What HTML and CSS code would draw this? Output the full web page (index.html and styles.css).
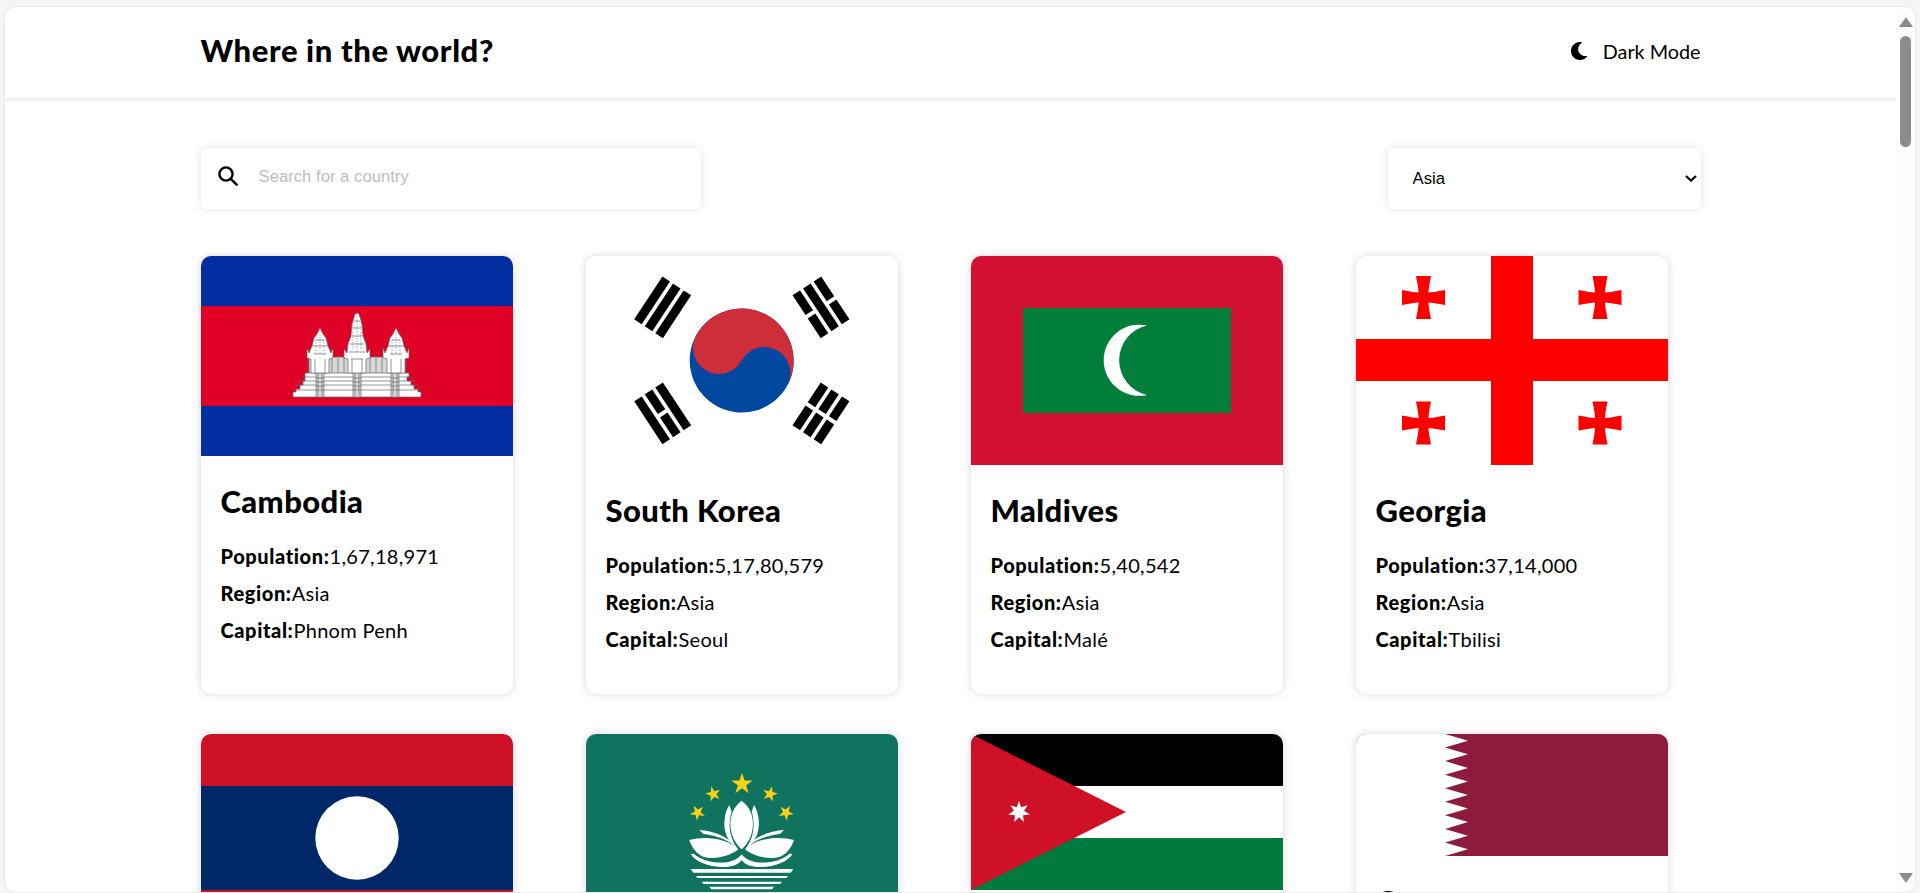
FILE: index.html
```html
<!DOCTYPE html>
<html lang="en">
<head>
    <meta charset="UTF-8">
    <title>Where in the world?</title>
    <link rel="stylesheet" href="styles.css">
</head>
<body>
    <div class="window">
        <div class="page">
            <header class="topbar">
                <div class="container topbar-row">
                    <h1 class="logo">Where in the world?</h1>
                    <div class="mode">
                        <svg class="mode-icon" viewBox="0 0 512 512"><path d="M283.211 512c78.962 0 151.079-35.925 198.857-94.792 7.068-8.708-.639-21.43-11.562-19.35-124.203 23.654-238.262-71.576-238.262-196.954 0-72.222 38.662-138.635 101.498-174.394 9.686-5.512 7.25-20.197-3.756-22.23A258.156 258.156 0 0 0 283.211 0c-141.309 0-256 114.511-256 256 0 141.309 114.511 256 256 256z"/></svg>
                        <span>Dark Mode</span>
                    </div>
                </div>
            </header>

            <main class="container">
                <div class="toolbar">
                    <label class="search">
                        <svg class="search-icon" viewBox="0 0 20 20"><circle cx="8" cy="8" r="6.6" fill="none" stroke="#000" stroke-width="2.4"/><path d="M12.8 12.8L18.6 18.6" stroke="#000" stroke-width="2.6" stroke-linecap="round"/></svg>
                        <input class="search-input" type="text" placeholder="Search for a country">
                    </label>
                    <div class="region-box">
                        <select class="region">
                            <option>Asia</option>
                        </select>
                        <svg class="region-arrow" viewBox="0 0 12 7"><path d="M1 1L6 5.6L11 1" fill="none" stroke="#000" stroke-width="2.2"/></svg>
                    </div>
                </div>

                <div class="grid">
                    <article class="card">
                        <svg class="flag" viewBox="0 0 312 200">
                            <rect width="312" height="200" fill="#032ea1"/>
                            <rect y="50" width="312" height="100" fill="#e00025"/>
                            <g fill="#fff" stroke="#666" stroke-width=".7">
                                <rect x="108" y="101" width="96" height="17" fill="#d8d8d8"/>
                                <path d="M107 118V102M113 118V102M119 118V102M125 118V102M131 118V102M137 118V102M143 118V102M169 118V102M175 118V102M181 118V102M187 118V102M193 118V102M199 118V102M205 118V102" fill="none"/>
                                <path d="M104 117H208V121H206V125H210V129H213V133H217V136H220V141H92V136H95V133H99V129H102V125H104Z"/>
                                <path d="M100 121H212M97 125H215M94 129H218M93 134H219" fill="none"/>
                                <path d="M115 117h8v24h-8zM152 117h8v24h-8zM190 117h8v24h-8z" fill="#ddd"/>
                                <path d="M117 118v22M121 118v22M154 118v22M158 118v22M192 118v22M196 118v22M115 122h8M115 126h8M115 130h8M115 134h8M152 122h8M152 126h8M152 130h8M152 134h8M190 122h8M190 126h8M190 130h8M190 134h8" fill="none"/>
                                <path d="M106 102V92L108 97L111 90L113 82L116 78L119 72L122 78L125 82L127 90L130 97L132 92V102L128 103V117H110V103Z"/>
                                <path d="M182 102V92L184 97L187 90L189 82L192 78L195 72L198 78L201 82L203 90L206 97L208 92V102L204 103V117H186V103Z"/>
                                <path d="M143 102V93L146 97L147 88L150 80L151 68L154 58L156 57L158 58L161 68L162 80L165 88L166 97L169 93V102L165 103V117H147V103Z"/>
                                <path d="M113 98H125M111 90H127M115 84H123M189 98H201M187 90H203M191 84H199M148 96H164M149 88H163M151 80H161M152 72H160M153 65H159M150 103H162M114 103V117M124 103V117M190 103V117M200 103V117M151 103V117M161 103V117" fill="none"/>
                                <path d="M119 76V98M195 76V98M156 60V96M152 66V94M160 66V94M115 84V98M123 84V98M191 84V98M199 84V98" fill="none" stroke-dasharray="1 1.5"/>
                            </g>
                        </svg>
                        <div class="card-body">
                            <h2 class="name">Cambodia</h2>
                            <p class="fact"><strong>Population:</strong>1,67,18,971</p>
                            <p class="fact"><strong>Region:</strong>Asia</p>
                            <p class="fact"><strong>Capital:</strong>Phnom Penh</p>
                        </div>
                    </article>

                    <article class="card">
                        <svg class="flag" viewBox="0 0 312 209">
                            <rect width="312" height="209" fill="#fff"/>
                            <g transform="translate(-6 -6) scale(.3333)">
                                <g transform="translate(248 172) rotate(-56.6)">
                                    <rect x="-77" y="-51.5" width="154" height="27"/>
                                    <rect x="-77" y="-13.5" width="154" height="27"/>
                                    <rect x="-77" y="24.5" width="154" height="27"/>
                                </g>
                                <g transform="translate(723 172) rotate(56.6)">
                                    <rect x="-77" y="-51.5" width="71" height="27"/>
                                    <rect x="6" y="-51.5" width="71" height="27"/>
                                    <rect x="-77" y="-13.5" width="154" height="27"/>
                                    <rect x="-77" y="24.5" width="71" height="27"/>
                                    <rect x="6" y="24.5" width="71" height="27"/>
                                </g>
                                <g transform="translate(248 490) rotate(56.6)">
                                    <rect x="-77" y="-51.5" width="154" height="27"/>
                                    <rect x="-77" y="-13.5" width="71" height="27"/>
                                    <rect x="6" y="-13.5" width="71" height="27"/>
                                    <rect x="-77" y="24.5" width="154" height="27"/>
                                </g>
                                <g transform="translate(723 490) rotate(-56.6)">
                                    <rect x="-77" y="-51.5" width="71" height="27"/>
                                    <rect x="6" y="-51.5" width="71" height="27"/>
                                    <rect x="-77" y="-13.5" width="71" height="27"/>
                                    <rect x="6" y="-13.5" width="71" height="27"/>
                                    <rect x="-77" y="24.5" width="71" height="27"/>
                                    <rect x="6" y="24.5" width="71" height="27"/>
                                </g>
                            </g>
                            <g transform="translate(155.7 104.5) rotate(29)">
                                <circle r="52" fill="#0047a0"/>
                                <path d="M-52 0A52 52 0 0 1 52 0A26 26 0 0 0 0 0A26 26 0 0 1 -52 0Z" fill="#cd2e3a"/>
                            </g>
                        </svg>
                        <div class="card-body">
                            <h2 class="name">South Korea</h2>
                            <p class="fact"><strong>Population:</strong>5,17,80,579</p>
                            <p class="fact"><strong>Region:</strong>Asia</p>
                            <p class="fact"><strong>Capital:</strong>Seoul</p>
                        </div>
                    </article>

                    <article class="card">
                        <svg class="flag" viewBox="0 0 312 209">
                            <rect width="312" height="209" fill="#d21034"/>
                            <rect x="52" y="52" width="208" height="105" fill="#007e3a"/>
                            <path d="M176 69.5A35.6 35.6 0 1 0 176 139A35.6 35.6 0 0 1 176 69.5Z" fill="#fff"/>
                        </svg>
                        <div class="card-body">
                            <h2 class="name">Maldives</h2>
                            <p class="fact"><strong>Population:</strong>5,40,542</p>
                            <p class="fact"><strong>Region:</strong>Asia</p>
                            <p class="fact"><strong>Capital:</strong>Malé</p>
                        </div>
                    </article>

                    <article class="card">
                        <svg class="flag" viewBox="0 0 312 209">
                            <defs>
                                <path id="bolnisi" d="M-7.5 -21.5H7.5Q5 -9 5 -5Q9 -5 21.5 -7.5V7.5Q9 5 5 5Q5 9 7.5 21.5H-7.5Q-5 9 -5 5Q-9 5 -21.5 7.5V-7.5Q-9 -5 -5 -5Q-5 -9 -7.5 -21.5Z"/>
                            </defs>
                            <rect width="312" height="209" fill="#fff"/>
                            <g fill="#f00">
                                <rect x="135" width="42" height="209"/>
                                <rect y="83" width="312" height="42"/>
                                <use href="#bolnisi" x="67.5" y="41.5"/>
                                <use href="#bolnisi" x="244" y="41.5"/>
                                <use href="#bolnisi" x="67.5" y="167"/>
                                <use href="#bolnisi" x="244" y="167"/>
                            </g>
                        </svg>
                        <div class="card-body">
                            <h2 class="name">Georgia</h2>
                            <p class="fact"><strong>Population:</strong>37,14,000</p>
                            <p class="fact"><strong>Region:</strong>Asia</p>
                            <p class="fact"><strong>Capital:</strong>Tbilisi</p>
                        </div>
                    </article>

                    <article class="card">
                        <svg class="flag" viewBox="0 0 312 208">
                            <rect width="312" height="208" fill="#ce1126"/>
                            <rect y="52" width="312" height="104" fill="#002868"/>
                            <circle cx="156" cy="104" r="41.7" fill="#fff"/>
                        </svg>
                        <div class="card-body">
                            <h2 class="name">Laos</h2>
                            <p class="fact"><strong>Population:</strong>72,75,556</p>
                            <p class="fact"><strong>Region:</strong>Asia</p>
                            <p class="fact"><strong>Capital:</strong>Vientiane</p>
                        </div>
                    </article>

                    <article class="card">
                        <svg class="flag" viewBox="0 0 312 209">
                            <defs>
                                <polygon id="star" points="0,-1 .225,-.309 .951,-.309 .363,.118 .588,.809 0,.382 -.588,.809 -.363,.118 -.951,-.309 -.225,-.309"/>
                            </defs>
                            <rect width="312" height="209" fill="#107360"/>
                            <g transform="translate(84 26) scale(.3333)">
                                <g fill="#fbd116">
                                    <use href="#star" transform="translate(216 72) scale(34)"/>
                                    <use href="#star" transform="translate(130 102) rotate(-15) scale(24)"/>
                                    <use href="#star" transform="translate(300 102) rotate(15) scale(24)"/>
                                    <use href="#star" transform="translate(83 158) rotate(-30) scale(24)"/>
                                    <use href="#star" transform="translate(348 158) rotate(30) scale(24)"/>
                                </g>
                                <g fill="#fff">
                                    <path d="M215 122C190 140 178 170 182 205C186 235 200 255 215 268C230 255 244 235 248 205C252 170 240 140 215 122Z"/>
                                    <path d="M178 135C165 155 158 190 168 222C175 242 190 258 205 268C186 245 170 205 185 155Z"/>
                                    <path d="M252 135C265 155 272 190 262 222C255 242 240 258 225 268C244 245 260 205 245 155Z"/>
                                    <path d="M58 240C100 228 170 232 205 268C180 290 130 300 100 290C80 282 65 262 58 240Z"/>
                                    <path d="M372 240C330 228 260 232 225 268C250 290 300 300 330 290C350 282 365 262 372 240Z"/>
                                    <path d="M88 210C130 212 175 230 195 258C165 235 130 225 100 222Z"/>
                                    <path d="M342 210C300 212 255 230 235 258C265 235 300 225 330 222Z"/>
                                    <path d="M62 282L72 281C90 300 135 312 175 306C195 302 208 292 215 283C222 292 235 302 255 306C295 312 340 300 358 281L368 282C350 310 300 325 255 320C235 318 222 310 215 300C208 310 195 318 175 320C130 325 80 310 62 282Z"/>
                                    <polygon points="62,327 370,327 362,338 70,338"/>
                                    <polygon points="78,348 354,348 350,354 82,354"/>
                                    <polygon points="95,365 336,365 330,372 100,372"/>
                                    <polygon points="118,380 312,380 306,388 124,388"/>
                                </g>
                            </g>
                        </svg>
                        <div class="card-body">
                            <h2 class="name">Macau</h2>
                            <p class="fact"><strong>Population:</strong>6,49,342</p>
                            <p class="fact"><strong>Region:</strong>Asia</p>
                        </div>
                    </article>

                    <article class="card">
                        <svg class="flag" viewBox="0 0 312 156">
                            <rect width="312" height="52" fill="#000"/>
                            <rect y="52" width="312" height="52" fill="#fff"/>
                            <rect y="104" width="312" height="52" fill="#007a3d"/>
                            <polygon points="0,0 155,78 0,156" fill="#ce1126"/>
                            <polygon transform="translate(48 78)" fill="#fff" points="0,-11 2.26,-4.69 8.6,-6.86 5.07,-1.16 10.72,2.45 4.07,3.24 4.77,9.91 0,5.2 -4.77,9.91 -4.07,3.24 -10.72,2.45 -5.07,-1.16 -8.6,-6.86 -2.26,-4.69"/>
                        </svg>
                        <div class="card-body">
                            <h2 class="name">Jordan</h2>
                            <p class="fact"><strong>Population:</strong>1,01,01,694</p>
                            <p class="fact"><strong>Region:</strong>Asia</p>
                            <p class="fact"><strong>Capital:</strong>Amman</p>
                        </div>
                    </article>

                    <article class="card">
                        <svg class="flag" viewBox="0 0 312 122">
                            <rect width="312" height="122" fill="#8d1b3d"/>
                            <polygon fill="#fff" points="0,0 89,0 112,6.8 89,13.6 112,20.3 89,27.1 112,33.9 89,40.7 112,47.5 89,54.2 112,61 89,67.8 112,74.6 89,81.3 112,88.1 89,94.9 112,101.7 89,108.4 112,115.2 89,122 0,122"/>
                        </svg>
                        <div class="card-body">
                            <h2 class="name">Qatar</h2>
                            <p class="fact"><strong>Population:</strong>28,81,060</p>
                            <p class="fact"><strong>Region:</strong>Asia</p>
                            <p class="fact"><strong>Capital:</strong>Doha</p>
                        </div>
                    </article>
                </div>
            </main>
        </div>

        <div class="scrollbar">
            <span class="arrow-up"></span>
            <span class="thumb"></span>
            <span class="arrow-down"></span>
        </div>
    </div>
</body>
</html>
```

FILE: styles.css
```css
html, body {
    height: 100%;
}

body {
    margin: 0;
    padding: 7px 5px 1px;
    box-sizing: border-box;
    background-color: #f5f5f5;
    color: #000;
    font-family: Lato, "Noto Sans", sans-serif;
    overflow: hidden;
}

.window {
    display: flex;
    height: 100%;
    background-color: #fff;
    border-radius: 10px;
    box-shadow: 0 0 2px rgba(0, 0, 0, 0.15);
    overflow: hidden;
}

.page {
    flex: 1;
    min-width: 0;
    overflow: hidden;
}

.container {
    width: 1500px;
    margin: 0 auto;
}

.topbar {
    height: 91px;
    box-shadow: 0 2px 4px rgba(0, 0, 0, 0.1);
}

.topbar-row {
    display: flex;
    align-items: center;
    justify-content: space-between;
    height: 100%;
    padding-bottom: 4px;
    box-sizing: border-box;
}

.logo {
    margin: 0 0 2px;
    font-size: 31px;
    font-weight: 900;
    letter-spacing: 0.6px;
}

.mode {
    display: flex;
    align-items: center;
    gap: 15px;
    font-size: 19.8px;
}

.mode-icon {
    width: 18px;
    height: 18px;
}

.toolbar {
    display: flex;
    justify-content: space-between;
    margin-top: 50px;
    margin-bottom: 47px;
}

.search {
    display: flex;
    align-items: center;
    gap: 21px;
    width: 500px;
    height: 61px;
    padding: 0 0 4px 17px;
    box-sizing: border-box;
    background-color: #fff;
    border-radius: 6px;
    box-shadow: 0 0 8px rgba(0, 0, 0, 0.12);
}

.search-icon {
    width: 20px;
    height: 20px;
    flex: none;
    margin-bottom: 2px;
}

.search-input {
    flex: 1;
    border: none;
    outline: none;
    background: none;
    padding: 0;
    font-family: "Liberation Sans", sans-serif;
    font-size: 16.7px;
}

.search-input::placeholder {
    color: #bdbdbd;
}

.region-box {
    position: relative;
}

.region {
    display: block;
    width: 313px;
    height: 61px;
    padding: 0 30px 0 25px;
    border: none;
    border-radius: 6px;
    outline: none;
    appearance: none;
    background-color: #fff;
    color: #000;
    font-family: "Liberation Sans", sans-serif;
    font-size: 16.7px;
    box-shadow: 0 0 8px rgba(0, 0, 0, 0.12);
}

.region-arrow {
    position: absolute;
    top: 27px;
    right: 4px;
    width: 12px;
    height: 7px;
    pointer-events: none;
}

.grid {
    display: grid;
    grid-template-columns: repeat(4, 312px);
    column-gap: 73px;
    row-gap: 40px;
}

.card {
    background-color: #fff;
    border-radius: 10px;
    overflow: hidden;
    box-shadow: 0 0 8px rgba(0, 0, 0, 0.16);
}

.flag {
    display: block;
    width: 100%;
}

.card-body {
    padding: 25px 20px 36px;
}

.name {
    margin: 0 0 17px;
    font-size: 31px;
    line-height: 40px;
    font-weight: 900;
    letter-spacing: 0.4px;
}

.fact {
    margin: 0;
    font-size: 20px;
    line-height: 37px;
    letter-spacing: 0.3px;
}

.fact strong {
    font-weight: 900;
    letter-spacing: 0.6px;
}

.scrollbar {
    display: flex;
    flex-direction: column;
    align-items: center;
    flex: none;
    width: 19px;
    padding: 10px 0 9px;
    box-sizing: border-box;
    background-color: #fdfdfd;
}

.arrow-up,
.arrow-down {
    width: 0;
    height: 0;
    border-left: 7px solid transparent;
    border-right: 7px solid transparent;
}

.arrow-up {
    border-bottom: 10px solid #8c8c8c;
}

.arrow-down {
    margin-top: auto;
    border-top: 10px solid #8c8c8c;
}

.thumb {
    width: 11px;
    height: 111px;
    margin-top: 9px;
    border-radius: 6px;
    background-color: #8c8c8c;
}
```
